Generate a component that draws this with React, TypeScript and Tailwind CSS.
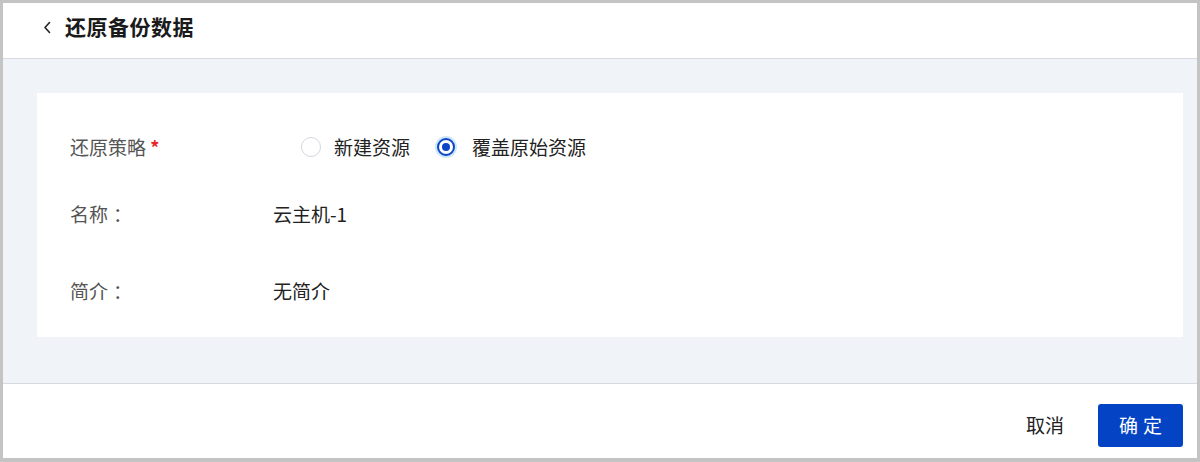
const FONT = { fontFamily: '"Noto Sans CJK SC", "Noto Sans", sans-serif' }

function Radio({ checked, label }: { checked?: boolean; label: string }) {
  return (
    <label className="flex items-center">
      <span className="flex h-[22px] w-[22px] items-center justify-center">
        {checked ? (
          <span className="flex h-[22px] w-[22px] items-center justify-center rounded-full bg-[#cde6fb]">
            <span className="flex h-[18px] w-[18px] items-center justify-center rounded-full border-2 border-[#0b46c8] bg-white">
              <span className="h-[8px] w-[8px] rounded-full bg-[#0b46c8]" />
            </span>
          </span>
        ) : (
          <span className="h-[20px] w-[20px] rounded-full border-[1.5px] border-[#d3d6db] bg-white" />
        )}
      </span>
      <span className={checked ? 'ml-[15px] text-[19px] text-[#222]' : 'ml-[12px] text-[19px] text-[#222]'}>
        {label}
      </span>
    </label>
  )
}

export default function App() {
  return (
    <div className="h-[462px] w-[1200px] bg-[#c4c4c4] px-[3px] pt-[3px] pb-[4px]" style={FONT}>
      <div className="flex h-full flex-col bg-white">
        {/* 标题 */}
        <div className="flex h-[56px] items-start border-b border-[#d6dae0] pt-[10px] pl-[40px]">
          <svg width="10" height="26" viewBox="0 0 10 26" className="mr-[12px]">
            <path d="M6.5 19.5 L2 14.5 L6.5 9.5" fill="none" stroke="#222" strokeWidth="1.6" strokeLinecap="round" strokeLinejoin="round" />
          </svg>
          <h1 className="text-[21px] leading-[26px] font-bold tracking-[0.5px] text-[#1a1a1a]">还原备份数据</h1>
        </div>

        {/* 内容 */}
        <div className="h-[324px] bg-[#f0f3f8] pt-[34px] pr-[14px] pl-[34px]">
          <div className="h-[244px] bg-white pt-[34px] pl-[33px]">
            <div className="flex h-[40px] items-center">
              <div className="w-[230px] text-[19px] text-[#555]">
                还原策略 <span className="text-[18px] font-bold text-[#e6262c]">*</span>
              </div>
              <div className="flex items-center">
                <Radio label="新建资源" />
                <div className="ml-[25px]">
                  <Radio checked label="覆盖原始资源" />
                </div>
              </div>
            </div>
            <div className="mt-[27px] flex h-[40px] items-center">
              <div className="w-[203px] text-[19px] text-[#555]">
                名称<span className="ml-[5px]">：</span>
              </div>
              <div className="text-[19px] text-[#222]">云主机-1</div>
            </div>
            <div className="mt-[37px] flex h-[40px] items-center">
              <div className="w-[203px] text-[19px] text-[#555]">
                简介<span className="ml-[5px]">：</span>
              </div>
              <div className="text-[19px] text-[#222]">无简介</div>
            </div>
          </div>
        </div>

        {/* 底部按钮 */}
        <div className="flex flex-1 items-start justify-end border-t border-[#d6dae0] pt-[20px] pr-[14px]">
          <button className="flex h-[43px] items-center text-[19px] text-[#222]">取消</button>
          <button className="ml-[34px] flex h-[43px] items-center gap-[5px] rounded-[3px] bg-[#0444c4] px-[21px] text-[19px] text-white">
            <span>确</span>
            <span>定</span>
          </button>
        </div>
      </div>
    </div>
  )
}
